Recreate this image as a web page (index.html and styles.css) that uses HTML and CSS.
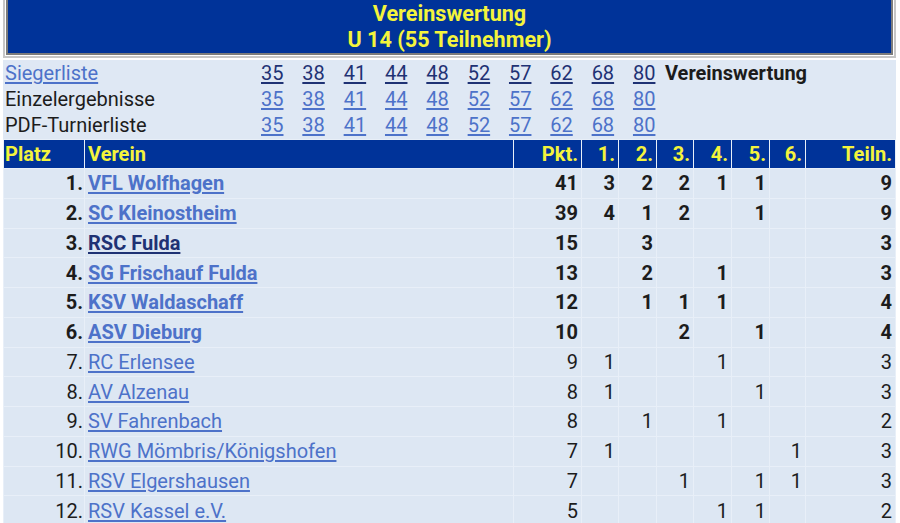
FILE: index.html
```html
<!DOCTYPE html>
<html lang="de">
<head>
<meta charset="utf-8">
<title>Vereinswertung U 14</title>
<link rel="stylesheet" href="styles.css">
</head>
<body>
<div class="title-outer">
  <div class="title-inner">
    <div>Vereinswertung</div>
    <div>U 14 (55 Teilnehmer)</div>
  </div>
</div>

<div class="nav">
  <div class="nav-row">
    <a class="lnk" href="#">Siegerliste</a>
    <a class="num dark" href="#">35</a><a class="num dark" href="#">38</a><a class="num dark" href="#">41</a><a class="num dark" href="#">44</a><a class="num dark" href="#">48</a><a class="num dark" href="#">52</a><a class="num dark" href="#">57</a><a class="num dark" href="#">62</a><a class="num dark" href="#">68</a><a class="num dark" href="#">80</a>
    <span class="current">Vereinswertung</span>
  </div>
  <div class="nav-row">
    <span class="label">Einzelergebnisse</span>
    <a class="num" href="#">35</a><a class="num" href="#">38</a><a class="num" href="#">41</a><a class="num" href="#">44</a><a class="num" href="#">48</a><a class="num" href="#">52</a><a class="num" href="#">57</a><a class="num" href="#">62</a><a class="num" href="#">68</a><a class="num" href="#">80</a>
    <span></span>
  </div>
  <div class="nav-row">
    <span class="label">PDF-Turnierliste</span>
    <a class="num" href="#">35</a><a class="num" href="#">38</a><a class="num" href="#">41</a><a class="num" href="#">44</a><a class="num" href="#">48</a><a class="num" href="#">52</a><a class="num" href="#">57</a><a class="num" href="#">62</a><a class="num" href="#">68</a><a class="num" href="#">80</a>
    <span></span>
  </div>
</div>

<table class="results">
  <thead>
    <tr>
      <th class="c-platz">Platz</th>
      <th class="c-verein">Verein</th>
      <th class="c-pkt r">Pkt.</th>
      <th class="c-1 r">1.</th>
      <th class="c-2 r">2.</th>
      <th class="c-3 r">3.</th>
      <th class="c-4 r">4.</th>
      <th class="c-5 r">5.</th>
      <th class="c-6 r">6.</th>
      <th class="c-teiln r">Teiln.</th>
    </tr>
  </thead>
  <tbody>
    <tr class="b"><td class="r p">1.</td><td class="v"><a href="#">VFL Wolfhagen</a></td><td class="r">41</td><td class="r">3</td><td class="r">2</td><td class="r">2</td><td class="r">1</td><td class="r">1</td><td class="r"></td><td class="r">9</td></tr>
    <tr class="b"><td class="r p">2.</td><td class="v"><a href="#">SC Kleinostheim</a></td><td class="r">39</td><td class="r">4</td><td class="r">1</td><td class="r">2</td><td class="r"></td><td class="r">1</td><td class="r"></td><td class="r">9</td></tr>
    <tr class="b"><td class="r p">3.</td><td class="v"><a class="dark" href="#">RSC Fulda</a></td><td class="r">15</td><td class="r"></td><td class="r">3</td><td class="r"></td><td class="r"></td><td class="r"></td><td class="r"></td><td class="r">3</td></tr>
    <tr class="b"><td class="r p">4.</td><td class="v"><a href="#">SG Frischauf Fulda</a></td><td class="r">13</td><td class="r"></td><td class="r">2</td><td class="r"></td><td class="r">1</td><td class="r"></td><td class="r"></td><td class="r">3</td></tr>
    <tr class="b"><td class="r p">5.</td><td class="v"><a href="#">KSV Waldaschaff</a></td><td class="r">12</td><td class="r"></td><td class="r">1</td><td class="r">1</td><td class="r">1</td><td class="r"></td><td class="r"></td><td class="r">4</td></tr>
    <tr class="b"><td class="r p">6.</td><td class="v"><a href="#">ASV Dieburg</a></td><td class="r">10</td><td class="r"></td><td class="r"></td><td class="r">2</td><td class="r"></td><td class="r">1</td><td class="r"></td><td class="r">4</td></tr>
    <tr><td class="r p">7.</td><td class="v"><a href="#">RC Erlensee</a></td><td class="r">9</td><td class="r">1</td><td class="r"></td><td class="r"></td><td class="r">1</td><td class="r"></td><td class="r"></td><td class="r">3</td></tr>
    <tr><td class="r p">8.</td><td class="v"><a href="#">AV Alzenau</a></td><td class="r">8</td><td class="r">1</td><td class="r"></td><td class="r"></td><td class="r"></td><td class="r">1</td><td class="r"></td><td class="r">3</td></tr>
    <tr><td class="r p">9.</td><td class="v"><a href="#">SV Fahrenbach</a></td><td class="r">8</td><td class="r"></td><td class="r">1</td><td class="r"></td><td class="r">1</td><td class="r"></td><td class="r"></td><td class="r">2</td></tr>
    <tr><td class="r p">10.</td><td class="v"><a href="#">RWG Mömbris/Königshofen</a></td><td class="r">7</td><td class="r">1</td><td class="r"></td><td class="r"></td><td class="r"></td><td class="r"></td><td class="r">1</td><td class="r">3</td></tr>
    <tr><td class="r p">11.</td><td class="v"><a href="#">RSV Elgershausen</a></td><td class="r">7</td><td class="r"></td><td class="r"></td><td class="r">1</td><td class="r"></td><td class="r">1</td><td class="r">1</td><td class="r">3</td></tr>
    <tr><td class="r p">12.</td><td class="v"><a href="#">RSV Kassel e.V.</a></td><td class="r">5</td><td class="r"></td><td class="r"></td><td class="r"></td><td class="r">1</td><td class="r">1</td><td class="r"></td><td class="r">2</td></tr>
  </tbody>
</table>
</body>
</html>
```

FILE: styles.css
```css
html, body {
  margin: 0;
  padding: 0;
  background: #ffffff;
}

body {
  font-family: Roboto, "Liberation Sans", sans-serif;
  font-size: 20px;
  color: #1c1c1c;
}

a {
  color: #4d72c9;
  text-decoration: underline;
  text-underline-offset: 2px;
}

a.dark {
  color: #1f3274;
}

/* Title box */
.title-outer {
  margin: 0 4px 0 3px;
  border: 2px solid #c6c6c6;
  border-top: none;
  padding: 0 1px 1px 1px;
  background: #ffffff;
}

.title-inner {
  background: #003399;
  border: 2px solid #7c7c7c;
  border-top: none;
  color: #f4f43c;
  font-weight: 700;
  font-size: 21.6px;
  text-align: center;
  line-height: 26px;
  height: 52px;
  padding-top: 1px;
  box-sizing: content-box;
}

/* Navigation */
.nav {
  margin: 2px 4px 0 3px;
  background: #dfe8f4;
  padding: 0 0 1px 0;
}

.nav-row {
  display: grid;
  grid-template-columns: 256px repeat(9, 41.33px) 32px auto;
  height: 26px;
  line-height: 26px;
  padding-left: 2px;
}

.nav-row .label {
  color: #1c1c1c;
}

.nav-row .lnk,
.nav-row .num {
  justify-self: start;
}

.nav-row .current {
  font-weight: 700;
  color: #1c1c1c;
}

/* Results table */
.results {
  margin: 0 4px 0 3px;
  width: 893px;
  table-layout: fixed;
  border-collapse: separate;
  border-spacing: 1px;
  background: #e8eff8;
}

.results th,
.results td {
  box-sizing: border-box;
  padding: 0 3px;
  white-space: nowrap;
  overflow: hidden;
}

.results th {
  background: #003399;
  color: #f4f43c;
  font-weight: 700;
  height: 28px;
  text-align: left;
}

.results th.c-platz { width: 80px; padding-left: 1px; }
.results th.c-verein { width: 428px; }
.results th.c-pkt { width: 67px; }
.results th.c-1 { width: 36px; }
.results th.c-2 { width: 37px; }
.results th.c-3 { width: 36px; }
.results th.c-4 { width: 37px; }
.results th.c-5 { width: 37px; }
.results th.c-6 { width: 35px; }
.results th.c-teiln { width: 89px; }

.results td {
  background: #dde7f3;
  height: 28.75px;
}

.results .r {
  text-align: right;
}

.results td.p {
  padding-right: 1px;
}

.results td.v {
  text-align: left;
}

.results tr.b td {
  font-weight: 700;
}
```
